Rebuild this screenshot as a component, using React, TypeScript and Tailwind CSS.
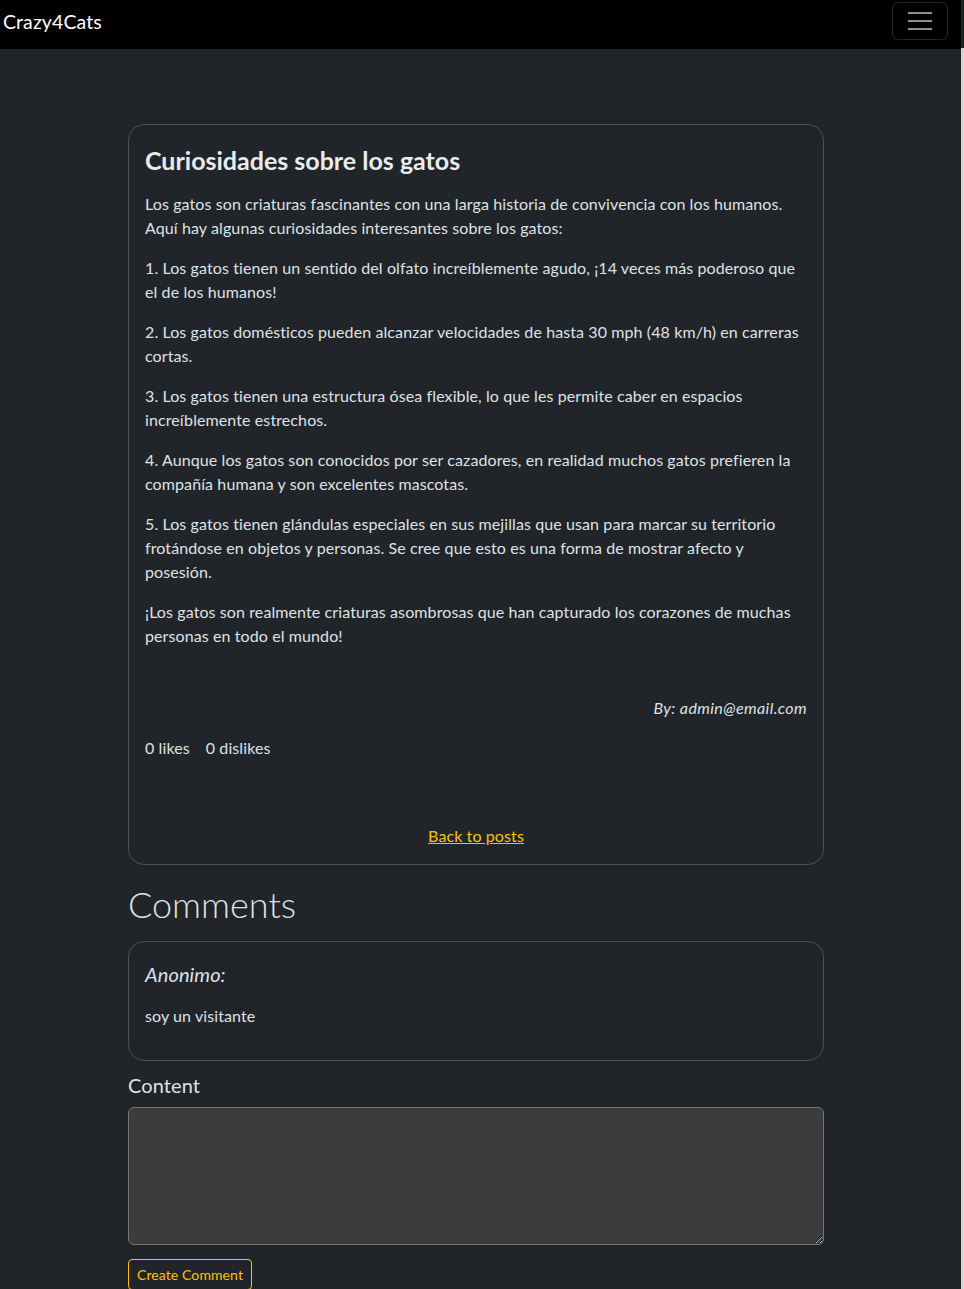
import React from "react";

const facts: string[] = [
  "Los gatos son criaturas fascinantes con una larga historia de convivencia con los humanos. Aquí hay algunas curiosidades interesantes sobre los gatos:",
  "1. Los gatos tienen un sentido del olfato increíblemente agudo, ¡14 veces más poderoso que el de los humanos!",
  "2. Los gatos domésticos pueden alcanzar velocidades de hasta 30 mph (48 km/h) en carreras cortas.",
  "3. Los gatos tienen una estructura ósea flexible, lo que les permite caber en espacios increíblemente estrechos.",
  "4. Aunque los gatos son conocidos por ser cazadores, en realidad muchos gatos prefieren la compañía humana y son excelentes mascotas.",
  "5. Los gatos tienen glándulas especiales en sus mejillas que usan para marcar su territorio frotándose en objetos y personas. Se cree que esto es una forma de mostrar afecto y posesión.",
  "¡Los gatos son realmente criaturas asombrosas que han capturado los corazones de muchas personas en todo el mundo!",
];

const Navbar = () => (
  <nav className="h-[49px] bg-black flex items-start justify-between pl-[3px] pr-[13px]">
    <a href="#" className="text-white text-[19.5px] leading-[24px] mt-[10px]">
      Crazy4Cats
    </a>
    <button className="mt-[2px] w-[56px] h-[38px] rounded-[6px] border border-[#262626] flex items-center justify-center">
      <svg width="26" height="20" viewBox="0 0 26 20">
        <path d="M1 2h24M1 10h24M1 18h24" stroke="#8c8c8c" strokeWidth="2" />
      </svg>
    </button>
  </nav>
);

export default function App() {
  return (
    <div
      className="min-h-[1289px] bg-[#212529] text-[#dee2e6] flex tracking-[0.1px]"
      style={{ fontFamily: "Lato, 'Noto Sans', sans-serif" }}
    >
      <div className="flex-1">
        <Navbar />
        <div className="pr-[9px] pt-[75px]">
          <div className="max-w-[696px] mx-auto">
            <div className="border border-[#4d5154] rounded-2xl">
              <div className="p-4">
                <h3 className="text-[25px] leading-[30px] font-bold tracking-normal mt-[4px] mb-[17px] text-[#e9ecef]">
                  Curiosidades sobre los gatos
                </h3>
                {facts.map((t, i) => (
                  <p key={i} className="text-base leading-6 mb-4">
                    {t}
                  </p>
                ))}
                <p className="mt-12 text-right italic text-base leading-6 tracking-[0.4px]">
                  By: admin@email.com
                </p>
                <div className="mt-4 flex gap-4 text-base leading-6">
                  <span>0 likes</span>
                  <span>0 dislikes</span>
                </div>
                <div className="mt-16 text-center">
                  <a href="#" className="text-[#ffc107] underline text-base leading-6">
                    Back to posts
                  </a>
                </div>
              </div>
            </div>

            <h2 className="text-[36px] leading-[46px] font-light tracking-normal mt-[16px] mb-[14px]">
              Comments
            </h2>

            <div className="border border-[#4d5154] rounded-2xl px-4 pt-5 pb-8">
              <h5 className="text-[20px] leading-6 italic">Anonimo:</h5>
              <p className="mt-[18px] text-base leading-6">soy un visitante</p>
            </div>

            <label className="block mt-3 text-[20px] leading-6">Content</label>
            <textarea className="block mt-[10px] w-full h-[138px] bg-[#3c3c3c] border border-[#777] rounded-[6px] p-2 text-[#dee2e6] outline-none" />
            <button className="mt-[14px] border border-[#ffc107] text-[#ffc107] rounded-[4px] px-2 py-1 text-sm leading-[21px]">
              Create Comment
            </button>
          </div>
        </div>
      </div>
      <div className="w-[3px] flex flex-col">
        <div className="h-[48px] bg-[#212529]" />
        <div className="flex-1 bg-[#d4d4d4]" />
      </div>
    </div>
  );
}
